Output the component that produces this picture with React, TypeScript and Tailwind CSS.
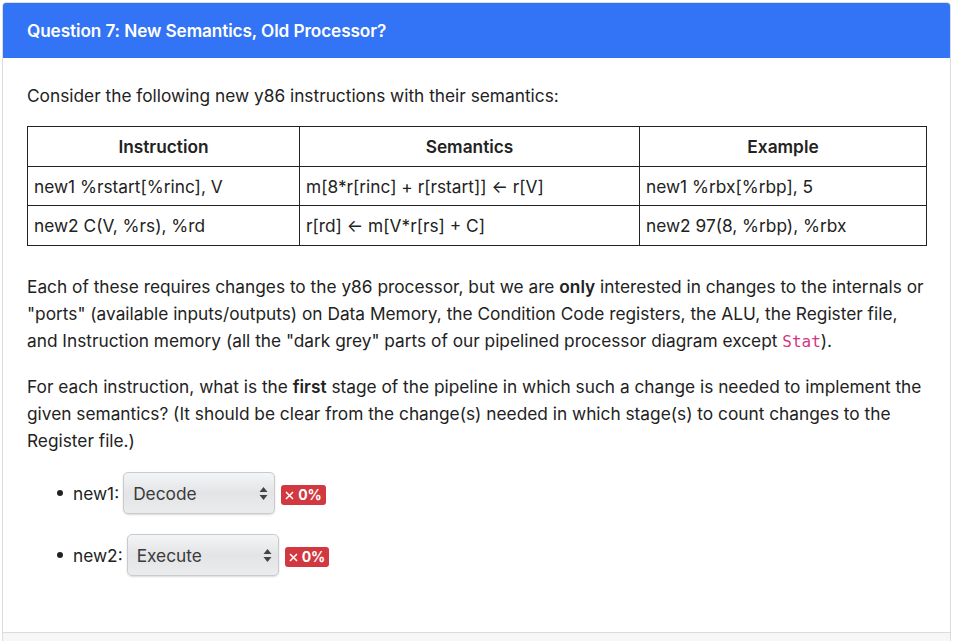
import React from "react";

function Select({ value }: { value: string }) {
  return (
    <span className="inline-flex items-center justify-between w-[152px] h-[42px] rounded-[5px] border border-[#c8cacd] bg-gradient-to-b from-[#f4f5f6] via-[#e3e4e6] to-[#ebecee] shadow-[0_1px_2px_rgba(0,0,0,0.15)] pl-[9px] pr-[6px] text-[#3a3a3a]">
      <span>{value}</span>
      <svg width="9" height="15" viewBox="0 0 9 15">
        <path d="M4.5 1 L8.5 6 L0.5 6 Z" fill="#444" />
        <path d="M4.5 14 L8.5 9 L0.5 9 Z" fill="#444" />
      </svg>
    </span>
  );
}

function Badge() {
  return (
    <span className="inline-flex items-center h-[20px] px-[4px] rounded-[3px] bg-[#d1383f] text-white text-[14px] font-bold leading-none">
      <svg width="9" height="9" viewBox="0 0 9 9" className="mr-[4px]">
        <path d="M1 1 L8 8 M8 1 L1 8" stroke="white" strokeWidth="1.5" />
      </svg>
      0%
    </span>
  );
}

export default function App() {
  return (
    <div className="w-[953px] h-[641px] bg-white overflow-hidden pt-[2px] px-[2px]" style={{ fontFamily: 'Inter, "Liberation Sans", Arial, sans-serif' }}>
      <div className="border border-[#dcdcdc] rounded-t-[4px] h-[700px] flex flex-col">
        <div className="bg-[#3373f5] h-[55px] flex items-center px-[24px] rounded-t-[3px]">
          <span className="text-white text-[17.2px] font-semibold tracking-[-0.1px]">Question 7: New Semantics, Old Processor?</span>
        </div>
        <div className="px-[24px] pt-[24px] text-[17.3px] leading-[27px] text-[#222]">
          <p>Consider the following new y86 instructions with their semantics:</p>
          <table className="mt-[17px] w-[900px] border-collapse border border-[#222] text-[17.3px]">
            <thead>
              <tr className="h-[40px]">
                <th className="border border-[#222] w-[272px] font-semibold">Instruction</th>
                <th className="border border-[#222] w-[340px] font-semibold">Semantics</th>
                <th className="border border-[#222] font-semibold">Example</th>
              </tr>
            </thead>
            <tbody>
              <tr className="h-[39px]">
                <td className="border border-[#222] px-[6px]">new1 %rstart[%rinc], V</td>
                <td className="border border-[#222] px-[6px]">m[8*r[rinc] + r[rstart]] ← r[V]</td>
                <td className="border border-[#222] px-[6px]">new1 %rbx[%rbp], 5</td>
              </tr>
              <tr className="h-[40px]">
                <td className="border border-[#222] px-[6px]">new2 C(V, %rs), %rd</td>
                <td className="border border-[#222] px-[6px]">r[rd] ← m[V*r[rs] + C]</td>
                <td className="border border-[#222] px-[6px]">new2 97(8, %rbp), %rbx</td>
              </tr>
            </tbody>
          </table>
          <p className="mt-[27px]">
            Each of these requires changes to the y86 processor, but we are <b className="font-semibold">only</b> interested in changes to the internals or "ports" (available inputs/outputs) on Data Memory, the Condition Code registers, the ALU, the Register file, and Instruction memory (all the "dark grey" parts of our pipelined processor diagram except{" "}
            <code className="text-[#d63384] text-[16px]" style={{ fontFamily: '"DejaVu Sans Mono", monospace' }}>Stat</code>).
          </p>
          <p className="mt-[18px]">
            For each instruction, what is the <b className="font-semibold">first</b> stage of the pipeline in which such a change is needed to implement the given semantics? (It should be clear from the change(s) needed in which stage(s) to count changes to the Register file.)
          </p>
          <ul className="mt-[18px] pl-[46px] list-none">
            <li className="flex items-center gap-[4px] relative">
              <span className="absolute left-[-16px] top-[18px] w-[6px] h-[6px] rounded-full bg-[#222]" />
              <span>new1:</span>
              <Select value="Decode" />
              <span className="ml-[2px]"><Badge /></span>
            </li>
            <li className="flex items-center gap-[4px] relative mt-[20px]">
              <span className="absolute left-[-16px] top-[18px] w-[6px] h-[6px] rounded-full bg-[#222]" />
              <span>new2:</span>
              <Select value="Execute" />
              <span className="ml-[2px]"><Badge /></span>
            </li>
          </ul>
        </div>
        <div className="mt-[56px] border-t border-[#dcdcdc] bg-[#f7f7f7] h-[40px]" />
      </div>
    </div>
  );
}
